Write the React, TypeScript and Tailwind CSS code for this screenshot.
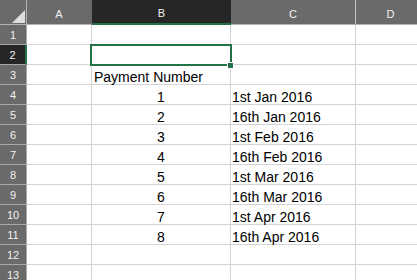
const cols = ["A", "B", "C", "D"];

const rows: { n: number; b?: string; bAlign?: "left" | "center"; c?: string }[] = [
  { n: 1 },
  { n: 2 },
  { n: 3, b: "Payment Number", bAlign: "left" },
  { n: 4, b: "1", c: "1st Jan 2016" },
  { n: 5, b: "2", c: "16th Jan 2016" },
  { n: 6, b: "3", c: "1st Feb 2016" },
  { n: 7, b: "4", c: "16th Feb 2016" },
  { n: 8, b: "5", c: "1st Mar 2016" },
  { n: 9, b: "6", c: "16th Mar 2016" },
  { n: 10, b: "7", c: "1st Apr 2016" },
  { n: 11, b: "8", c: "16th Apr 2016" },
  { n: 12 },
  { n: 13 },
];

const App = () => {
  return (
    <div
      className="relative w-[417px] h-[280px] overflow-hidden bg-white"
      style={{ fontFamily: '"Liberation Sans", Arial, sans-serif' }}
    >
      <div className="grid grid-cols-[27px_65px_139px_125px_70px] auto-rows-[20px] grid-rows-[25px]">
        {/* corner */}
        <div className="flex items-end justify-end bg-[#6a6a6a] border-r border-b border-[#b3b3b3] pr-[1px] pb-[1px]">
          <svg width="13" height="13" viewBox="0 0 13 13">
            <polygon points="0,13 13,13 13,0" fill="#dedede" />
          </svg>
        </div>

        {/* column headers */}
        {cols.map((c) =>
          c === "B" ? (
            <div
              key={c}
              className="flex items-center justify-center pt-[4px] bg-[#262626] border-b-2 border-b-[#217346] text-[11px] text-[#f2f2f2]"
            >
              {c}
            </div>
          ) : (
            <div
              key={c}
              className={`flex items-center justify-center pt-[5px] bg-[#6a6a6a] border-b border-b-[#b3b3b3] text-[11px] text-[#f2f2f2] ${
                c === "A" ? "border-r border-r-[#6a6a6a]" : "border-r border-r-[#c4c4c4]"
              }`}
            >
              {c}
            </div>
          )
        )}

        {/* body rows */}
        {rows.map((r) => (
          <div key={r.n} className="contents">
            {r.n === 2 ? (
              <div className="flex items-center justify-center pt-[2px] bg-[#262626] border-r-2 border-r-[#217346] border-b border-b-[#a8a8a8] text-[11px] text-[#f2f2f2]">
                {r.n}
              </div>
            ) : (
              <div className="flex items-center justify-center pt-[2px] bg-[#6a6a6a] border-r border-b border-[#a8a8a8] text-[11px] text-[#f2f2f2]">
                {r.n}
              </div>
            )}
            <div className="border-r border-b border-[#d4d4d4]" />
            <div
              className={`flex items-end border-r border-b border-[#d4d4d4] text-[14px] leading-[14px] text-black whitespace-nowrap ${
                r.bAlign === "left" ? "pl-[2px]" : "justify-center"
              }`}
            >
              {r.b}
            </div>
            <div className="flex items-end pl-[1px] border-r border-b border-[#d4d4d4] text-[14px] leading-[14px] text-black whitespace-nowrap">
              {r.c}
            </div>
            <div className="border-b border-[#d4d4d4]" />
          </div>
        ))}
      </div>

      {/* selection on B2 */}
      <div className="absolute left-[90px] top-[44px] w-[142px] h-[22px] border-2 border-[#217346]" />
      <div className="absolute left-[227px] top-[62px] w-[7px] h-[7px] bg-[#217346] border border-white" />
    </div>
  );
};

export default App;
